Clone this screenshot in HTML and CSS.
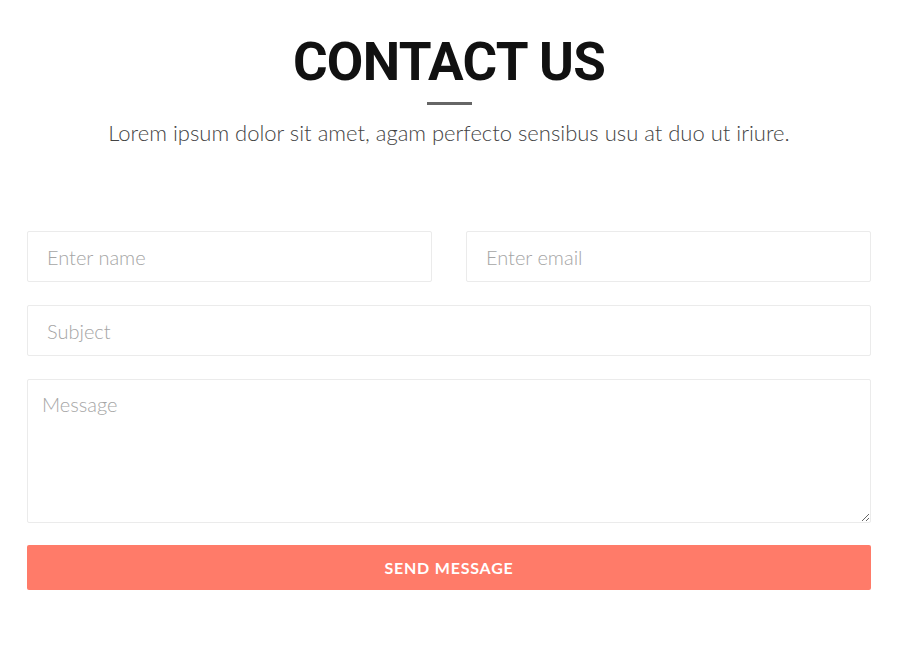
FILE: index.html
```html
<!DOCTYPE html>
<html>
<head>
<meta charset="utf-8">
<link rel="stylesheet" href="styles.css">
</head>
<body>
<section class="contact">
  <header class="head">
    <h1 class="title">CONTACT US</h1>
    <div class="divider"></div>
    <p class="lead">Lorem ipsum dolor sit amet, agam perfecto sensibus usu at duo ut iriure.</p>
  </header>
  <form class="form">
    <div class="row two">
      <input class="field" type="text" placeholder="Enter name">
      <input class="field" type="email" placeholder="Enter email">
    </div>
    <div class="row">
      <input class="field" type="text" placeholder="Subject">
    </div>
    <div class="row last">
      <textarea class="field area" placeholder="Message"></textarea>
    </div>
    <button class="send" type="button">SEND MESSAGE</button>
  </form>
</section>
</body>
</html>
```
FILE: styles.css
```css
* { box-sizing: border-box; }
html, body { margin: 0; padding: 0; background: #fff; }
body { font-family: Lato, "Open Sans", sans-serif; }
.contact { width: 844px; margin: 0 auto; padding-top: 30px; }
.head { display: flex; flex-direction: column; align-items: center; }
.title {
  font-family: Roboto, sans-serif;
  font-weight: 700;
  font-size: 53px;
  line-height: 64px;
  margin: 0;
  color: #111;
  letter-spacing: -0.7px;
}
.divider { width: 45px; height: 3px; background: #666; margin-top: 8px; }
.lead {
  margin: 13px 0 0;
  font-weight: 300;
  font-size: 22px;
  line-height: 30px;
  color: #444;
}
.form { margin-top: 83px; display: flex; flex-direction: column; }
.row { display: flex; margin-bottom: 23px; }
.row.last { margin-bottom: 22px; }
.row.two { gap: 34px; }
.row.two .field { flex: 1; }
.field {
  width: 100%;
  height: 51px;
  border: 1px solid #ebebeb;
  border-radius: 2px;
  padding: 0 19px;
  font-family: Lato, sans-serif;
  font-weight: 300;
  font-size: 20px;
  color: #333;
  outline: none;
  background: #fff;
}
.field::placeholder { color: #a5a5a5; opacity: 1; }
.area { height: 144px; padding: 12px 14px; resize: vertical; display: block; }
.send {
  height: 45px;
  border: 0;
  border-radius: 2px;
  background: #ff7b69;
  color: #fff;
  font-family: Lato, sans-serif;
  font-weight: 700;
  font-size: 16px;
  letter-spacing: 0.8px;
  cursor: pointer;
}
```
